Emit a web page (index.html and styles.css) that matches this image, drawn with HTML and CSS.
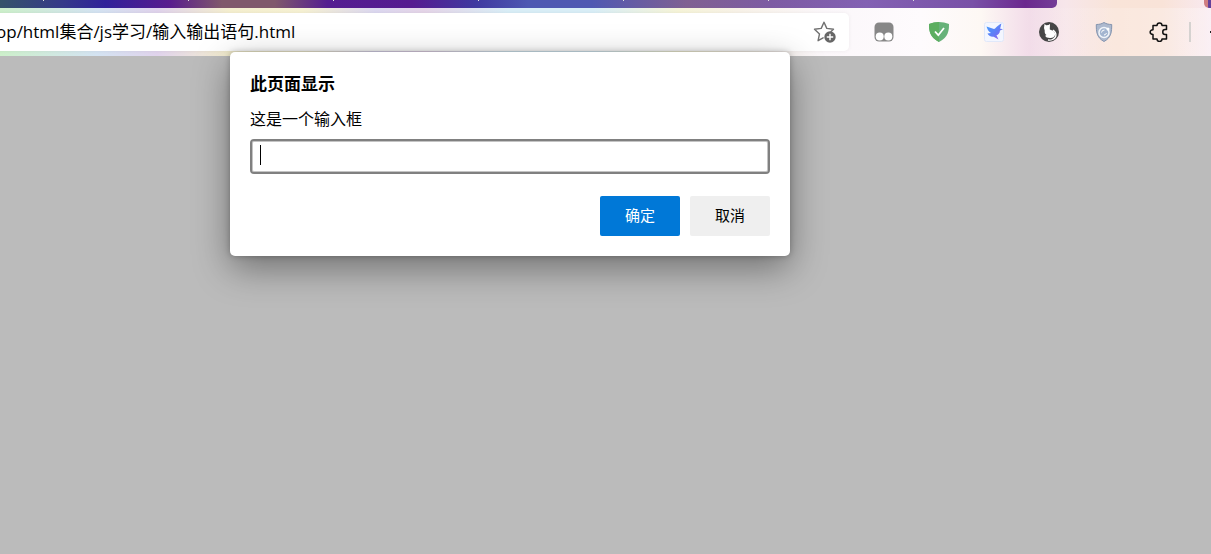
FILE: index.html
```html
<!DOCTYPE html>
<html lang="zh-CN">
<head>
    <meta charset="UTF-8">
    <meta name="viewport" content="width=device-width, initial-scale=1.0">
    <title>输入输出语句</title>
    <link rel="stylesheet" href="styles.css">
</head>
<body>
    <header class="browser">
        <div class="tab-strip">
            <div class="tabs">
                <i></i><i></i><i></i><i></i><i></i><i></i><i></i>
            </div>
            <div class="window-edge"></div>
        </div>
        <div class="toolbar">
            <div class="address-bar">
                <input type="text" class="address" aria-label="地址" value="op/html集合/js学习/输入输出语句.html">
                <button type="button" class="icon-button favorite" aria-label="收藏">
                    <svg width="24" height="24" viewBox="0 0 24 24">
                        <path d="M20.500 9.200l-6.700-.8L11 2.200 8.200 8.400l-6.700.8 5 4.700-1.400 6.800 5-2.900M20.500 9.200l-2.500 2.300" fill="none" stroke="#707070" stroke-width="1.4" stroke-linejoin="round" stroke-linecap="round"/>
                        <circle cx="17" cy="17" r="5.7" fill="#666"/>
                        <path d="M17 13.800v6.400M13.800 17h6.400" stroke="#fff" stroke-width="1.4"/>
                    </svg>
                </button>
            </div>
            <div class="extensions">
                <button type="button" class="icon-button" aria-label="脚本管理">
                    <svg width="20" height="20" viewBox="0 0 20 20">
                        <rect x=".5" y=".5" width="19" height="19" rx="4.5" fill="#878787"/>
                        <circle cx="5.7" cy="14.6" r="4" fill="#fff"/>
                        <circle cx="14.3" cy="14.6" r="4" fill="#fff"/>
                    </svg>
                </button>
                <button type="button" class="icon-button" aria-label="广告拦截">
                    <svg width="20" height="20" viewBox="0 0 20 20">
                        <path d="M10 0C7 0 3 .7 0 2c0 6 .3 13 10 18C19.7 15 20 8 20 2 17 .7 13 0 10 0z" fill="#67b279"/>
                        <path d="M10 0C7 0 3 .7 0 2c0 6 .3 13 10 18z" fill="#5cae60"/>
                        <path d="M6 9.500l3.300 3.700L15 6" fill="none" stroke="#fff" stroke-width="1.8"/>
                    </svg>
                </button>
                <button type="button" class="icon-button" aria-label="迅雷">
                    <svg width="20" height="20" viewBox="0 0 20 20">
                        <defs>
                            <linearGradient id="bird" x1="0" y1="0" x2="1" y2="1">
                                <stop offset="0" stop-color="#3fa0ff"/>
                                <stop offset=".6" stop-color="#6579f5"/>
                                <stop offset="1" stop-color="#b957e8"/>
                            </linearGradient>
                        </defs>
                        <rect x=".5" y=".5" width="19" height="19" rx="2" fill="#f3f6ff" stroke="#e0e8fa"/>
                        <path d="M2.500 4.500L10 7c2-.5 3-3.500 7.500-5.500-1 2-.5 3.500-1.500 5l3 .7-3 1.300c-.2 3-1.800 4.300-3.500 4.800l2 4.200-4.800-2.800C6.500 15 4.500 13.500 3.500 11.500L7 11C4.500 9.500 3.200 7 2.500 4.500z" fill="url(#bird)"/>
                    </svg>
                </button>
                <button type="button" class="icon-button" aria-label="篡改猫">
                    <svg width="20" height="20" viewBox="0 0 20 20">
                        <circle cx="10" cy="10" r="10" fill="#464646"/>
                        <path d="M5.500 2l1.700 1.200 2.300-.3L11 2l-.2 4.500c-.2 1 .2 1.300 1.200 1.500 3 .6 4.500 2.500 4 5-.5 2-2.500 3.200-5 3-2.500 0-4.200-.8-4.800-2.200l1.300-.8c-1.500-1-2-2.500-1.800-4.500L5 6z" fill="#fff"/>
                        <path d="M14 8c4 2.500 4 7.500-.5 9.500-1.500.7-3 .8-4.500.5" fill="none" stroke="#fff" stroke-width="1.300"/>
                    </svg>
                </button>
                <button type="button" class="icon-button" aria-label="隐私保护">
                    <svg width="20" height="20" viewBox="0 0 20 20">
                        <path d="M10 .5C7.500 2 5 2.500 2.300 2.500c0 7 .2 13 7.700 17 7.500-4 7.700-10 7.700-17C15 2.500 12.500 2 10 .5z" fill="#adb9ce" stroke="#8494ae"/>
                        <circle cx="10" cy="10.500" r="5" fill="#a3b5d0" stroke="#f1f5fa" stroke-width="1.5"/>
                        <path d="M7.500 10.500a3 3 0 0 1 3-2.500M12.500 11a3 3 0 0 1-2.500 2" fill="none" stroke="#fff"/>
                        <circle cx="14" cy="7" r="1.500" fill="#fff"/>
                    </svg>
                </button>
                <button type="button" class="icon-button" aria-label="扩展">
                    <svg width="20" height="20" viewBox="0 0 20 20">
                        <path d="M4 3.500H8C8 0 13 0 13 3.500H17.500V7.500H16C13 7.500 13 12.500 16 12.500H17.500V17H13C13 20.300 8 20.300 8 17H4V12.500C.2 12.500.2 7.700 4 7.700z" fill="none" stroke="#111" stroke-width="1.5" stroke-linejoin="round"/>
                    </svg>
                </button>
            </div>
            <div class="divider"></div>
            <div class="collections"></div>
        </div>
    </header>

    <main class="page"></main>

    <form class="dialog" role="dialog" aria-labelledby="dialogTitle">
        <h1 id="dialogTitle">此页面显示</h1>
        <label for="promptInput">这是一个输入框</label>
        <div class="prompt-field">
            <input type="text" id="promptInput" autocomplete="off">
            <span class="caret"></span>
        </div>
        <div class="actions">
            <button type="submit" class="button primary">确定</button>
            <button type="button" class="button">取消</button>
        </div>
    </form>
</body>
</html>
```
FILE: styles.css
```css
* {
    box-sizing: border-box;
}

body {
    display: flex;
    flex-direction: column;
    min-height: 100vh;
    margin: 0;
    overflow: hidden;
    font-family: "Open Sans", "Noto Sans CJK SC", sans-serif;
    color: #000;
    background-color: #bbb;
}

.browser {
    background: linear-gradient(90deg, #cdf0cb 0%, #d4e3f2 8%, #e0d3ec 13%, #f5efcf 19%, #f6f1d3 25%, #dcd8f0 31%, #e5d5e8 35%, #d9eef7 42%, #d9eef7 49%, #f6f4d8 56%, #f8f2e8 61%, #fbf7fa 68%, #fefbfd 76%, #fdf8f4 81%, #f2dce9 85%, #f7e6ea 88%, #f9e4d8 92%, #f9e3d8 96%, #f8e9f0 100%);
}

.tab-strip {
    display: flex;
    justify-content: space-between;
    height: 8px;
}

.tabs {
    display: flex;
    gap: 144px;
    width: 1057px;
    padding-left: 43px;
    border-radius: 0 0 5px 0;
    background: linear-gradient(90deg, #36536a 0%, #35388a 6%, #30219a 10%, #581c8e 16%, #80586c 21%, #80586c 26%, #541d91 31%, #561b90 39%, #3f39a0 45%, #4d58b2 50%, #5058b2 56%, #806092 65%, #7d5ba3 73%, #8361b3 82%, #7951a7 92%, #6b288e 97%, #743c97 100%);
}

.tabs i {
    width: 1px;
    height: 1px;
    background-color: #ddd;
}

.window-edge {
    width: 7px;
    border-radius: 0 0 0 5px;
    background: linear-gradient(90deg, #cf7e82 60%, #64419a 60%);
}

.toolbar {
    display: flex;
    align-items: center;
    height: 48px;
    background: linear-gradient(90deg, transparent 84%, rgba(255, 255, 255, 0.3) 100%);
}

.address-bar {
    display: flex;
    flex: 1;
    align-items: center;
    height: 38px;
    margin-left: -4px;
    padding-right: 9px;
    border-radius: 0 5px 5px 0;
    background-color: #fff;
    box-shadow: 0 0 4px rgba(0, 0, 0, 0.06);
}

.address {
    flex: 1;
    min-width: 0;
    padding: 0 0 4px;
    border: none;
    outline: none;
    background: none;
    font-family: inherit;
    font-size: 17px;
    color: #000;
}

.icon-button {
    display: flex;
    align-items: center;
    justify-content: center;
    width: 55px;
    height: 38px;
    padding: 0;
    border: none;
    background: none;
    cursor: pointer;
}

.favorite {
    width: 30px;
}

.extensions {
    display: flex;
    margin-left: 7px;
}

.divider {
    width: 2px;
    height: 20px;
    margin: 0 19px 0 3px;
    background-color: #d5d2d0;
}

.collections {
    width: 1px;
    height: 2px;
    background-color: #222;
}

.page {
    flex: 1;
    background-color: #bbb;
}

.dialog {
    position: absolute;
    top: 52px;
    left: 230px;
    width: 560px;
    padding: 20px;
    border-radius: 5px;
    background-color: #fff;
    box-shadow: 0 12px 36px rgba(0, 0, 0, 0.4), 0 0 6px rgba(0, 0, 0, 0.25);
}

.dialog h1 {
    margin: 0 0 11px;
    font-size: 17px;
    line-height: 24px;
}

.dialog label {
    display: block;
    margin-bottom: 8px;
    font-size: 16px;
    line-height: 24px;
}

.prompt-field {
    position: relative;
    margin-bottom: 22px;
}

.prompt-field input {
    display: block;
    width: 100%;
    height: 35px;
    padding: 0 8px;
    border: 2px solid #808080;
    border-radius: 4px;
    outline: none;
    box-shadow: inset 0 0 0 1px #c4c4c4;
    font-family: inherit;
    font-size: 16px;
}

.caret {
    position: absolute;
    top: 6px;
    left: 10px;
    width: 1px;
    height: 20px;
    background-color: #000;
}

.actions {
    display: flex;
    justify-content: flex-end;
    gap: 10px;
}

.button {
    width: 80px;
    height: 40px;
    padding: 0 0 4px;
    border: none;
    border-radius: 2px;
    background-color: #efefef;
    font-family: inherit;
    font-size: 15px;
    color: #000;
    cursor: pointer;
}

.button.primary {
    background-color: #0078d7;
    color: #fff;
}
```
